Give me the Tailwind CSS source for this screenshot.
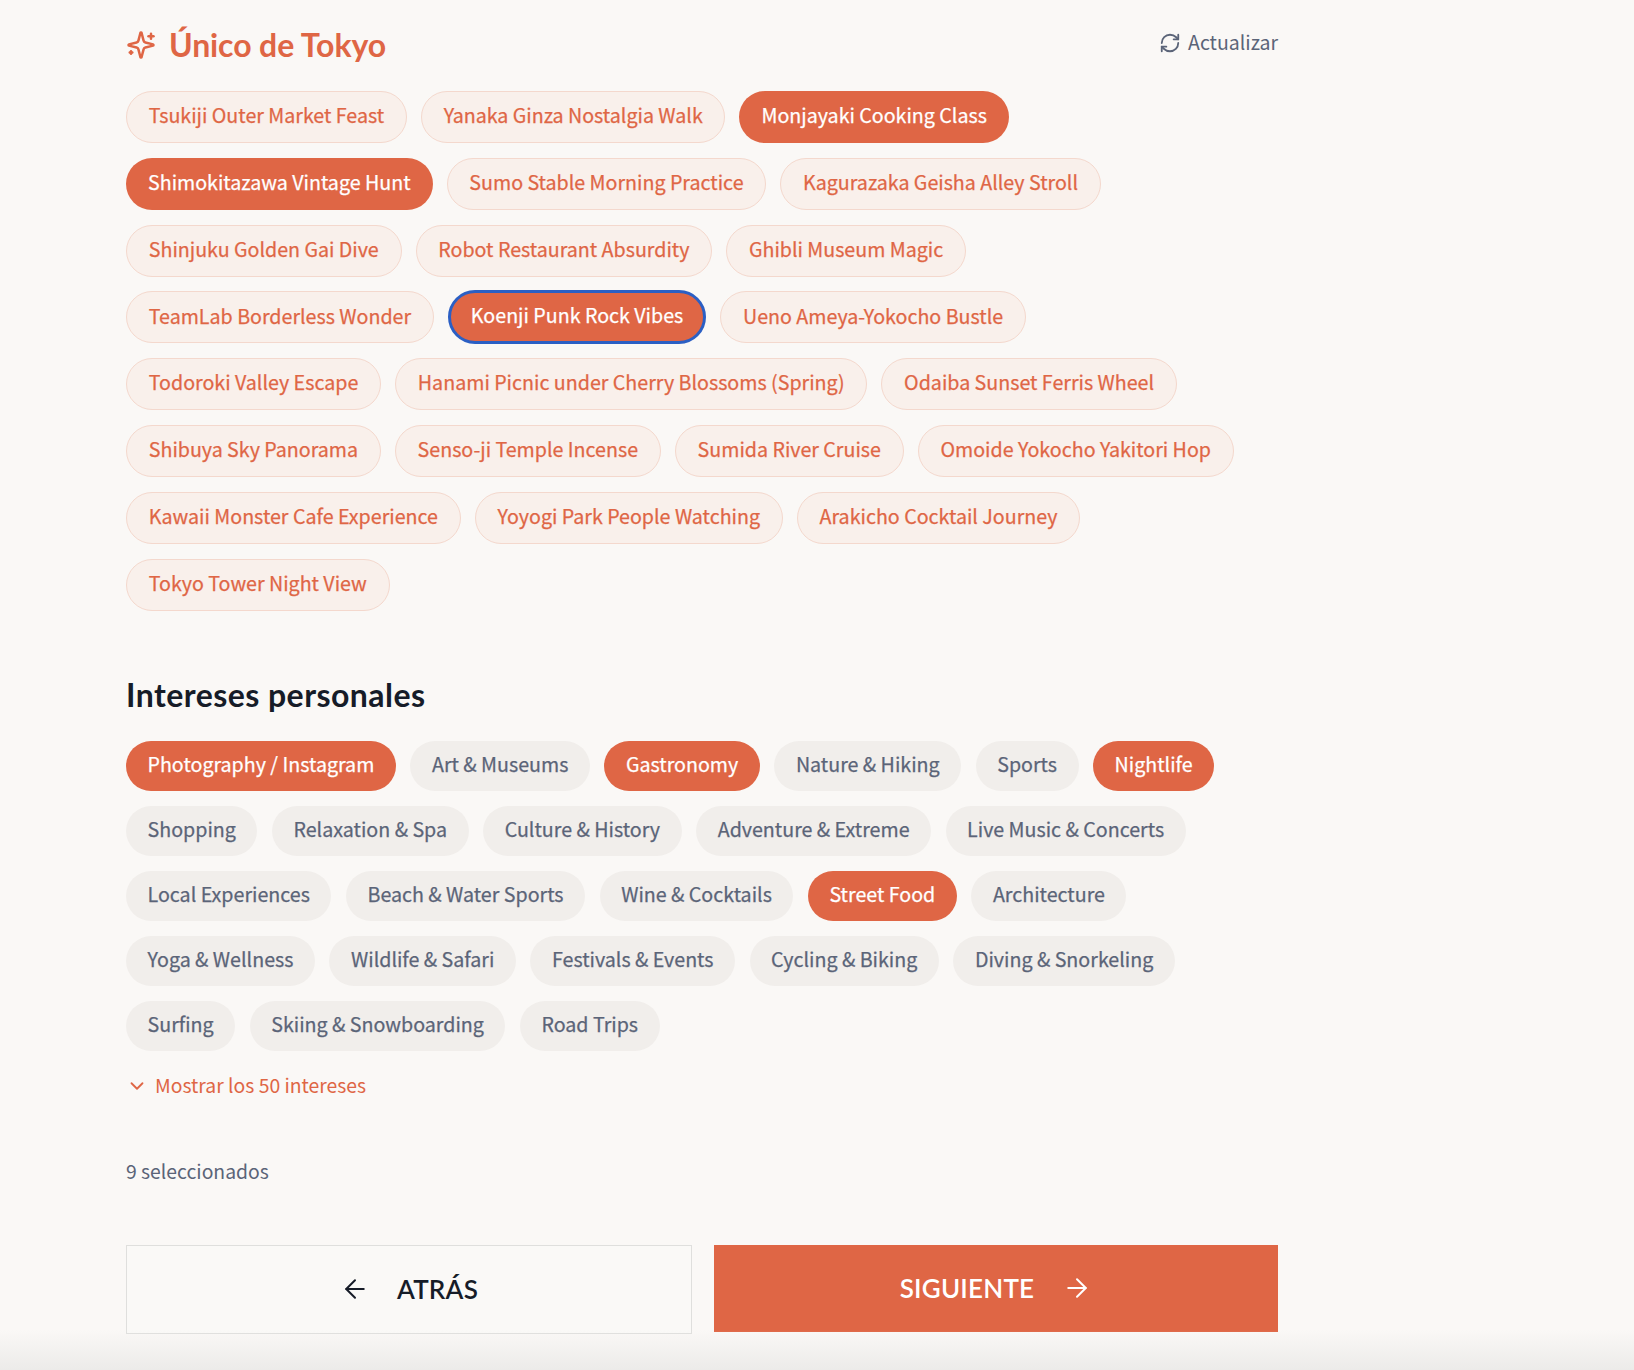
<!DOCTYPE html>
<html lang="es">
<head>
    <meta charset="UTF-8">
    <meta name="viewport" content="width=device-width, initial-scale=1.0">
    <title>Intereses</title>
    <script src="https://cdn.jsdelivr.net/npm/@tailwindcss/browser@4"></script>
</head>
<body class="bg-[#faf8f6] h-[1370px] overflow-hidden relative font-['Noto_Sans_CJK_SC',sans-serif]">
    <main class="ml-[126px] w-[1152px] pt-[22px]">
        <!-- Único de Tokyo -->
        <div class="flex items-center justify-between h-[46px]">
            <h2 class="flex items-center gap-[13px] text-[32px] font-bold tracking-[-0.1px] text-[#df6645] font-['Lato',sans-serif]">
                <svg class="w-[30px] h-[30px]" viewBox="0 0 24 24" fill="none" stroke="currentColor" stroke-width="2" stroke-linecap="round" stroke-linejoin="round"><path d="M9.94 15.5A2 2 0 0 0 8.5 14.06l-6.14-1.58a.5.5 0 0 1 0-.96L8.5 9.94A2 2 0 0 0 9.94 8.5l1.58-6.14a.5.5 0 0 1 .96 0L14.06 8.5A2 2 0 0 0 15.5 9.94l6.14 1.58a.5.5 0 0 1 0 .96L15.5 14.06a2 2 0 0 0-1.44 1.44l-1.58 6.14a.5.5 0 0 1-.96 0z"/><path d="M20 3v4"/><path d="M22 5h-4"/><path d="M4 17v2"/><path d="M5 18H3"/></svg>
                Único de Tokyo
            </h2>
            <button class="flex items-center gap-[7px] mb-[4px] text-[19.5px] text-[#5b6478]">
                <svg class="w-[22px] h-[22px]" viewBox="0 0 24 24" fill="none" stroke="currentColor" stroke-width="2" stroke-linecap="round" stroke-linejoin="round"><path d="M3 12a9 9 0 0 1 9-9 9.75 9.75 0 0 1 6.74 2.74L21 8"/><path d="M21 3v5h-5"/><path d="M21 12a9 9 0 0 1-9 9 9.75 9.75 0 0 1-6.74-2.74L3 16"/><path d="M8 16H3v5"/></svg>
                <span class="pb-[2px]">Actualizar</span>
            </button>
        </div>

        <div class="flex flex-wrap gap-x-[14px] gap-y-[14.8px] mt-[23px] text-[19.65px] [-webkit-text-stroke:0.25px]">
            <button class="h-[52px] px-[21.75px] pb-[4px] rounded-full border border-[#f4d8cd] bg-[#f9f0eb] text-[#df6645]">Tsukiji Outer Market Feast</button>
            <button class="h-[52px] px-[21.75px] pb-[4px] rounded-full border border-[#f4d8cd] bg-[#f9f0eb] text-[#df6645]">Yanaka Ginza Nostalgia Walk</button>
            <button class="h-[52px] px-[22px] pb-[4px] rounded-full bg-[#df6645] text-white">Monjayaki Cooking Class</button>
            <button class="h-[52px] px-[22px] pb-[4px] rounded-full bg-[#df6645] text-white">Shimokitazawa Vintage Hunt</button>
            <button class="h-[52px] px-[21.75px] pb-[4px] rounded-full border border-[#f4d8cd] bg-[#f9f0eb] text-[#df6645]">Sumo Stable Morning Practice</button>
            <button class="h-[52px] px-[21.75px] pb-[4px] rounded-full border border-[#f4d8cd] bg-[#f9f0eb] text-[#df6645]">Kagurazaka Geisha Alley Stroll</button>
            <button class="h-[52px] px-[21.75px] pb-[4px] rounded-full border border-[#f4d8cd] bg-[#f9f0eb] text-[#df6645]">Shinjuku Golden Gai Dive</button>
            <button class="h-[52px] px-[21.75px] pb-[4px] rounded-full border border-[#f4d8cd] bg-[#f9f0eb] text-[#df6645]">Robot Restaurant Absurdity</button>
            <button class="h-[52px] px-[21.75px] pb-[4px] rounded-full border border-[#f4d8cd] bg-[#f9f0eb] text-[#df6645]">Ghibli Museum Magic</button>
            <button class="h-[52px] px-[21.75px] pb-[4px] rounded-full border border-[#f4d8cd] bg-[#f9f0eb] text-[#df6645]">TeamLab Borderless Wonder</button>
            <button class="h-[54px] -my-[1px] px-[20px] pb-[5px] rounded-full border-[3px] border-[#2b5fc4] bg-[#df6645] text-white">Koenji Punk Rock Vibes</button>
            <button class="h-[52px] px-[21.75px] pb-[4px] rounded-full border border-[#f4d8cd] bg-[#f9f0eb] text-[#df6645]">Ueno Ameya-Yokocho Bustle</button>
            <button class="h-[52px] px-[21.75px] pb-[4px] rounded-full border border-[#f4d8cd] bg-[#f9f0eb] text-[#df6645]">Todoroki Valley Escape</button>
            <button class="h-[52px] px-[21.75px] pb-[4px] rounded-full border border-[#f4d8cd] bg-[#f9f0eb] text-[#df6645]">Hanami Picnic under Cherry Blossoms (Spring)</button>
            <button class="h-[52px] px-[21.75px] pb-[4px] rounded-full border border-[#f4d8cd] bg-[#f9f0eb] text-[#df6645]">Odaiba Sunset Ferris Wheel</button>
            <button class="h-[52px] px-[21.75px] pb-[4px] rounded-full border border-[#f4d8cd] bg-[#f9f0eb] text-[#df6645]">Shibuya Sky Panorama</button>
            <button class="h-[52px] px-[21.75px] pb-[4px] rounded-full border border-[#f4d8cd] bg-[#f9f0eb] text-[#df6645]">Senso-ji Temple Incense</button>
            <button class="h-[52px] px-[21.75px] pb-[4px] rounded-full border border-[#f4d8cd] bg-[#f9f0eb] text-[#df6645]">Sumida River Cruise</button>
            <button class="h-[52px] px-[21.75px] pb-[4px] rounded-full border border-[#f4d8cd] bg-[#f9f0eb] text-[#df6645]">Omoide Yokocho Yakitori Hop</button>
            <button class="h-[52px] px-[21.75px] pb-[4px] rounded-full border border-[#f4d8cd] bg-[#f9f0eb] text-[#df6645]">Kawaii Monster Cafe Experience</button>
            <button class="h-[52px] px-[21.75px] pb-[4px] rounded-full border border-[#f4d8cd] bg-[#f9f0eb] text-[#df6645]">Yoyogi Park People Watching</button>
            <button class="h-[52px] px-[21.75px] pb-[4px] rounded-full border border-[#f4d8cd] bg-[#f9f0eb] text-[#df6645]">Arakicho Cocktail Journey</button>
            <button class="h-[52px] px-[21.75px] pb-[4px] rounded-full border border-[#f4d8cd] bg-[#f9f0eb] text-[#df6645]">Tokyo Tower Night View</button>
        </div>

        <!-- Intereses personales -->
        <h2 class="mt-[61px] h-[46px] flex items-center text-[32px] font-bold tracking-[0.45px] text-[#161c28] font-['Lato',sans-serif]">Intereses personales</h2>

        <div class="flex flex-wrap gap-x-[14.6px] gap-y-[15px] mt-[23px] text-[19.65px] [-webkit-text-stroke:0.25px]">
            <button class="h-[50px] px-[21.5px] pb-[4px] rounded-full bg-[#df6645] text-white">Photography / Instagram</button>
            <button class="h-[50px] px-[21.5px] pb-[4px] rounded-full bg-[#f1eeeb] text-[#5b6478]">Art &amp; Museums</button>
            <button class="h-[50px] px-[21.5px] pb-[4px] rounded-full bg-[#df6645] text-white">Gastronomy</button>
            <button class="h-[50px] px-[21.5px] pb-[4px] rounded-full bg-[#f1eeeb] text-[#5b6478]">Nature &amp; Hiking</button>
            <button class="h-[50px] px-[21.5px] pb-[4px] rounded-full bg-[#f1eeeb] text-[#5b6478]">Sports</button>
            <button class="h-[50px] px-[21.5px] pb-[4px] rounded-full bg-[#df6645] text-white">Nightlife</button>
            <button class="h-[50px] px-[21.5px] pb-[4px] rounded-full bg-[#f1eeeb] text-[#5b6478]">Shopping</button>
            <button class="h-[50px] px-[21.5px] pb-[4px] rounded-full bg-[#f1eeeb] text-[#5b6478]">Relaxation &amp; Spa</button>
            <button class="h-[50px] px-[21.5px] pb-[4px] rounded-full bg-[#f1eeeb] text-[#5b6478]">Culture &amp; History</button>
            <button class="h-[50px] px-[21.5px] pb-[4px] rounded-full bg-[#f1eeeb] text-[#5b6478]">Adventure &amp; Extreme</button>
            <button class="h-[50px] px-[21.5px] pb-[4px] rounded-full bg-[#f1eeeb] text-[#5b6478]">Live Music &amp; Concerts</button>
            <button class="h-[50px] px-[21.5px] pb-[4px] rounded-full bg-[#f1eeeb] text-[#5b6478]">Local Experiences</button>
            <button class="h-[50px] px-[21.5px] pb-[4px] rounded-full bg-[#f1eeeb] text-[#5b6478]">Beach &amp; Water Sports</button>
            <button class="h-[50px] px-[21.5px] pb-[4px] rounded-full bg-[#f1eeeb] text-[#5b6478]">Wine &amp; Cocktails</button>
            <button class="h-[50px] px-[21.5px] pb-[4px] rounded-full bg-[#df6645] text-white">Street Food</button>
            <button class="h-[50px] px-[21.5px] pb-[4px] rounded-full bg-[#f1eeeb] text-[#5b6478]">Architecture</button>
            <button class="h-[50px] px-[21.5px] pb-[4px] rounded-full bg-[#f1eeeb] text-[#5b6478]">Yoga &amp; Wellness</button>
            <button class="h-[50px] px-[21.5px] pb-[4px] rounded-full bg-[#f1eeeb] text-[#5b6478]">Wildlife &amp; Safari</button>
            <button class="h-[50px] px-[21.5px] pb-[4px] rounded-full bg-[#f1eeeb] text-[#5b6478]">Festivals &amp; Events</button>
            <button class="h-[50px] px-[21.5px] pb-[4px] rounded-full bg-[#f1eeeb] text-[#5b6478]">Cycling &amp; Biking</button>
            <button class="h-[50px] px-[21.5px] pb-[4px] rounded-full bg-[#f1eeeb] text-[#5b6478]">Diving &amp; Snorkeling</button>
            <button class="h-[50px] px-[21.5px] pb-[4px] rounded-full bg-[#f1eeeb] text-[#5b6478]">Surfing</button>
            <button class="h-[50px] px-[21.5px] pb-[4px] rounded-full bg-[#f1eeeb] text-[#5b6478]">Skiing &amp; Snowboarding</button>
            <button class="h-[50px] px-[21.5px] pb-[4px] rounded-full bg-[#f1eeeb] text-[#5b6478]">Road Trips</button>
        </div>

        <button class="flex items-center gap-[7px] mt-[20px] h-[30px] text-[19.35px] text-[#df6645]">
            <svg class="w-[22px] h-[22px]" viewBox="0 0 24 24" fill="none" stroke="currentColor" stroke-width="2" stroke-linecap="round" stroke-linejoin="round"><path d="m6 9 6 6 6-6"/></svg>
            Mostrar los 50 intereses
        </button>

        <p class="mt-[55px] h-[30px] leading-[30px] text-[19.35px] text-[#5b6478]">9 seleccionados</p>

        <div class="flex gap-[22px] mt-[59px] items-start">
            <button class="w-[566px] h-[89px] flex items-center justify-center gap-[27px] border border-[#dfdfdd] bg-[#faf9f7] text-[#161c28] text-[26px] font-semibold tracking-[0.2px] font-['Lato',sans-serif]">
                <svg class="w-[30px] h-[30px]" viewBox="0 0 24 24" fill="none" stroke="currentColor" stroke-width="1.6" stroke-linecap="round" stroke-linejoin="round"><path d="m12 19-7-7 7-7"/><path d="M19 12H5"/></svg>
                ATRÁS
            </button>
            <button class="w-[564px] h-[87px] flex items-center justify-center gap-[28px] bg-[#df6645] text-white text-[26px] font-semibold tracking-[0.2px] font-['Lato',sans-serif]">
                SIGUIENTE
                <svg class="w-[30px] h-[30px]" viewBox="0 0 24 24" fill="none" stroke="currentColor" stroke-width="1.6" stroke-linecap="round" stroke-linejoin="round"><path d="M5 12h14"/><path d="m12 5 7 7-7 7"/></svg>
            </button>
        </div>
    </main>
    <!-- sombra inferior -->
    <div class="absolute inset-x-0 bottom-0 h-[40px] bg-gradient-to-t from-[#ecebe9] to-transparent pointer-events-none"></div>
</body>
</html>
